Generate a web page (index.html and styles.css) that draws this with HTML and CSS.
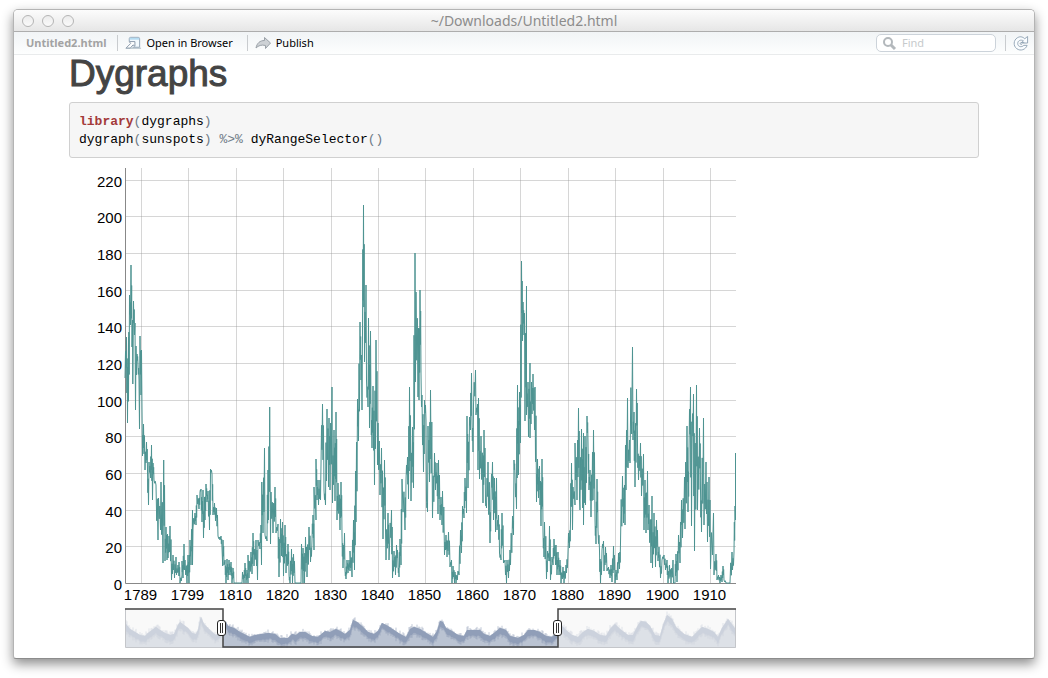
FILE: index.html
```html
<!DOCTYPE html>
<html lang="en">
<head>
<meta charset="utf-8">
<title>~/Downloads/Untitled2.html</title>
<link rel="stylesheet" href="styles.css">
</head>
<body>
<div class="window">
  <header class="titlebar">
    <div class="lights">
      <button class="light" aria-label="Close"></button>
      <button class="light" aria-label="Minimize"></button>
      <button class="light" aria-label="Zoom"></button>
    </div>
    <div class="title">~/Downloads/Untitled2.html</div>
  </header>
  <nav class="toolbar">
    <span class="filename">Untitled2.html</span>
    <span class="separator"></span>
    <button class="tool">
      <svg class="tool-icon" width="17" height="14" viewBox="0 0 18 14" fill="none">
        <path d="M4.500 5V2.500Q4.500 1 6 1H14Q15.500 1 15.500 2.500V11.500H8" fill="#f3f9fd" stroke="#8fa3b5"/>
        <path d="M5 2.500H15" stroke="#b4dcf2" stroke-width="2"/>
        <path d="M1 12.500L6 7.500L4.500 5.500H10.500V10.500L8.500 9L5.500 12.500Z" fill="#fff" stroke="#8796a8"/>
        <path d="M1 12.500H17" stroke="#a5b2be"/>
      </svg>
      Open in Browser
    </button>
    <span class="separator"></span>
    <button class="tool">
      <svg class="tool-icon" width="17" height="14" viewBox="0 0 17 14">
        <path d="M1 12C2 7 5 4.500 9.500 4.500V1.500L15.500 7L10.500 12.500V9.500C6.500 8.500 3.500 9.500 1 12Z" fill="#cdd1d5" stroke="#9aa1a8"/>
      </svg>
      Publish
    </button>
    <label class="search">
      <svg width="15" height="15" viewBox="0 0 15 15" fill="none" stroke="#b3b8bc">
        <circle cx="6" cy="6" r="4" stroke-width="2"/>
        <path d="M9 9L13 13" stroke-width="3"/>
      </svg>
      <input class="search-input" type="text" placeholder="Find" aria-label="Find">
    </label>
    <span class="separator"></span>
    <button class="refresh" aria-label="Refresh">
      <svg width="16" height="17" viewBox="0 0 17 17" fill="none" stroke="#92a4b5">
        <path d="M12.500 3.500L15.500 1V8H9L11 5.500C8 4 5 5.500 5 8.500C5 12 9 13 11.500 10.500H15C13.500 15 8 17 4 14C0 11 .500 5 4.500 2.500C7 .800 10 1 12.500 3.500Z" fill="#fafdff"/>
        <path d="M12 7.500H8.500C7 8 7.500 10 9.500 9.500" />
      </svg>
    </button>
  </nav>
  <main class="content">
    <h1 class="heading">Dygraphs</h1>
<pre class="code"><code><span class="keyword">library</span><span class="op">(</span>dygraphs<span class="op">)</span>
dygraph<span class="op">(</span>sunspots<span class="op">)</span> <span class="op">%&gt;%</span> dyRangeSelector<span class="op">()</span></code></pre>
    <div class="chart">
      <svg class="plot" id="plot" viewBox="69 168 667 434" role="img" aria-label="Sunspots by year"></svg>
      <div class="selector">
        <svg class="overview" id="overview" viewBox="125 608 611 40" aria-hidden="true"></svg>
        <input class="handle" type="range" min="0" max="611" value="97" aria-label="Range start">
        <input class="handle" type="range" min="0" max="611" value="432" aria-label="Range end">
      </div>
    </div>
  </main>
</div>
<script src="chart.js"></script>
</body>
</html>
```
FILE: styles.css
```css
* {
  box-sizing: border-box;
}

body {
  margin: 0;
  padding: 9px 13px 19px;
  background: #fff;
  font-family: "Noto Sans", "Open Sans", sans-serif;
}

button {
  padding: 0;
  border: 0;
  background: none;
  font: inherit;
  color: inherit;
}

svg {
  display: block;
}

.window {
  min-height: calc(100vh - 28px);
  border: 1px solid #b4b4b4;
  border-bottom-color: #8c8c8c;
  border-radius: 5px 5px 3px 3px;
  background: #fff;
  box-shadow: 0 5px 12px rgba(0, 0, 0, 0.45);
}

.titlebar {
  display: grid;
  grid-template-columns: 1fr auto 1fr;
  align-items: center;
  height: 22px;
  padding: 0 8px;
  border-bottom: 1px solid #adadad;
  border-radius: 4px 4px 0 0;
  background: linear-gradient(#fcfcfc, #e6e6e6);
}

.lights {
  display: flex;
  gap: 8px;
}

.light {
  width: 12px;
  height: 12px;
  border: 1px solid #b5b5b5;
  border-radius: 50%;
  background: linear-gradient(#ececec, #fafafa);
}

.title {
  font-size: 14px;
  line-height: 20px;
  color: #8c8c8c;
}

.toolbar {
  display: flex;
  align-items: center;
  height: 23px;
  padding: 0 5px 0 12px;
  border-bottom: 1px solid #e9ebec;
  background: linear-gradient(#f1f4f6, #fdfefe);
  font-size: 11px;
  line-height: 16px;
  color: #000;
}

.filename {
  margin-right: 2px;
  font-weight: bold;
  color: #a3a3a3;
}

.separator {
  width: 1px;
  height: 16px;
  margin: 0 7px 0 9px;
  background: #c9cccf;
}

.tool {
  display: flex;
  align-items: center;
  gap: 4px;
  margin-right: 5px;
}

.search {
  display: flex;
  align-items: center;
  gap: 5px;
  width: 120px;
  height: 18px;
  margin-left: auto;
  padding: 0 5px;
  border: 1px solid #ccd3da;
  border-radius: 5px;
  background: #fff;
}

.search-input {
  width: 80px;
  padding: 0;
  border: 0;
  outline: 0;
  background: none;
  font: inherit;
}

.search-input::placeholder {
  color: #c6cacc;
}

.content {
  padding: 0 55px 10px;
}

.heading {
  margin: 0 0 9px;
  font-family: "Liberation Sans", Arial, sans-serif;
  font-size: 37px;
  font-weight: normal;
  line-height: 38px;
  color: #444;
  -webkit-text-stroke: 1px #444;
}

.code {
  margin: 0 0 10px;
  padding: 10px 9px 8px;
  border: 1px solid #d0d0d0;
  border-radius: 3px;
  background: #f6f6f6;
  font-family: "Liberation Mono", "Courier New", monospace;
  font-size: 13px;
  line-height: 18px;
  color: #000;
}

.code code {
  font: inherit;
}

.keyword {
  font-weight: bold;
  color: #a33a3a;
}

.op {
  color: #6f7b87;
}

.chart {
  width: 667px;
  max-width: 100%;
}

.plot {
  width: 100%;
}

.grid {
  stroke: #999;
  stroke-opacity: 0.4;
}

.axis {
  stroke: #888;
}

.series {
  fill: none;
  stroke: #4d9391;
}

.label {
  font-family: "Liberation Sans", Arial, sans-serif;
  font-size: 15px;
  fill: #000;
}

.label-y {
  text-anchor: end;
}

.label-x {
  text-anchor: middle;
}

.selector {
  position: relative;
  margin: 6px 0 0 56px;
}

.overview {
  width: 100%;
}

.handle {
  position: absolute;
  top: 12px;
  left: -5px;
  width: calc(100% + 10px);
  height: 16px;
  margin: 0;
  appearance: none;
  background: none;
  pointer-events: none;
}

.handle::-webkit-slider-thumb {
  appearance: none;
  width: 9px;
  height: 16px;
  border: 1px solid #222;
  border-radius: 3px;
  background: linear-gradient(90deg, #fff 2px, #333 2px, #333 3px, #fff 3px, #fff 4px, #333 4px, #333 5px, #fff 5px) center / 7px 10px no-repeat #fff;
  pointer-events: auto;
}
```
FILE: chart.js
```js
(function () {
const plot = document.getElementById("plot");
const overview = document.getElementById("overview");

function add(parent, name, attrs, text) {
  const node = document.createElementNS("http://www.w3.org/2000/svg", name);
  for (const key in attrs) node.setAttribute(key, attrs[key]);
  if (text !== undefined) node.textContent = text;
  parent.appendChild(node);
}

// Grid and axis labels
const rows = [583.5, 546.5, 510.5, 473.5, 436.5, 400.5, 363.5, 326.5, 290.5, 253.5, 216.5, 180.5];
rows.forEach((y, i) => {
  if (i) add(plot, "path", { class: "grid", d: `M125 ${y}H736` });
  add(plot, "text", { class: "label label-y", x: 122, y: y + 6 }, i * 20);
});
const years = [1789, 1799, 1810, 1820, 1830, 1840, 1850, 1860, 1870, 1880, 1890, 1900, 1910];
const columns = [141.5, 188.5, 236.5, 283.5, 331.5, 378.5, 425.5, 473.5, 520.5, 568.5, 615.5, 663.5, 710.5];
columns.forEach((x, i) => {
  add(plot, "path", { class: "grid", d: `M${x} 168V583` });
  add(plot, "text", { class: "label label-x", x: x - 1, y: 600 }, years[i]);
});
add(plot, "path", { class: "axis", d: "M125.5 168V583.5H736", fill: "none" });

// Monthly sunspot counts
const series = `125,378 126.5,337 127.5,423 128.5,337 128.5,401 129.5,295 130.5,325 131,265 132,347 132.5,320 132.8,384 133.5,301 134.5,335 135,323 135.5,410 136,346 136.5,375 137,354 138,364 139,380 139.5,429 140,336 141,395 141.5,350 142,409
142.5,456 143.5,424 145,470 146.5,442 147.5,470 148.5,505 149,462 150.5,478 151.5,445 152.5,500 153,463 154,480 156,485 158,540 158.5,498 160.5,530 161,482 163,563 163.7,460 165,561 166,527 167,560 167.5,534 168,558 169,536 169.5,552 170,526 171.5,580 173,555 174.5,578 176,557 176.5,575 178,565 179,576 179,562 180,583 182,575 182,561 183,578 184,544 184.5,570 185,560 187,583 188,555 189,583 190,540 191,565 192.5,510 192.5,565 193,528 195,513 196,525 197,495 199,509 200,492 201,489 202,522 203,490 203.5,538 204.5,497 205,520 206,484 207,502 208,491 209.5,530 210.5,469 212,474 213,515 214.5,503 215.5,521 216.5,508 218,536 220,540 221,536 222,548 222.7,566 223,540 224,565 225,560 226,583 227,559 228,580 229,560 230,575 231,562 232,583 233,568 234,583 242,583 242.5,572 244,583 245,563 246,583 247,570 248,583 248,555 249,578 251,552 252,574 253,533 254,566 256,540 257.5,580 258,540 260,549 261,525 261.5,565 261.8,482 263,533 264.5,448 265,535 267,541 268,470 268.5,520 269.7,407
270.5,544 271,492 273,533 275,487 276,533 278,524 279,577 280.5,519 281.5,556 282.5,522 283.5,576 285,525 286,573 288,544 289,575 290,583 291.5,549 292.5,583 293.5,554 295,583 301,583 301.5,544 303,583 303,548 304.5,583 305.5,537 307,577 309,527 310.5,562 312,540 313,515 314,550 314,487 316,520 316,459 317,500 318,480 318.5,505 320,480 320.5,500 321,465 322.5,404 324,490 325.5,505 327,409 328.5,487 329,418 330,490 332,387 332.5,503 334,430 335,501 336,412 337,520 338,483 340,530 341,482 342,535 343,568 344.5,533 345,570 346,579 347,560 348,573 349,560 350,571 350,551 352,577 353.5,520 354.5,570 355.5,471 356,522 357.5,399 358.5,441
360,322 361,380 361.5,355 362,410 362.5,332 363.5,205 364.5,362 366,285 366.5,380 368,407 368.5,318 369.5,428 370.5,331 371,411 372,448 373,386 374.5,485 376,340 377.5,465 378,423 380,495 381.5,448 383,539 384.5,460 385.5,530 386,560 388,513 389,560 389.5,547 391.5,510 392.5,578 394,551 395.5,575 396.5,545 398,565 399,577 400,539 401,565 402,479 405,530 406,480 407.5,457 408.5,499 409.5,387 411,501 412.5,427 413.5,488 415,253 415.5,382 416,292 418,397 418.5,328 419,400 420,290 421,374 421.5,407 422,395 423.5,472 424.5,400 426,420 426.5,500 427.5,512 428,426 429.5,482 430.5,390 432.5,518 434.5,453 435.5,490 437,463 438,514 438.5,460 440,520 441,497 442,525 442.5,491 444.5,555 446,535 447,557 448.5,532 450,567 451.5,560 452,583 453,566 454.5,583 455,572 456,583 458,571 459,575 460.5,530 461.5,553 462.5,506 464,518 465,478 466.5,513 467,416 468,488 469.5,417
470.5,430 471.5,373 472,420 473,452 473.5,405 475.5,370 476,415 477.5,404 478,470 478.5,398 479.5,479 481,436 483,503 484,430 485.5,502 486.5,508 488,462 490,543 491,496 492.5,462 493.5,520 494.5,478 495.5,532 496.5,478 497,530 498.5,515 499.5,553 501,560 502,513 503.5,563 505,560 506.5,583 507,560 508.5,578 510,550 510.5,565 512.5,516 513.5,535 514,460 515,475 516.5,509 517.5,385 518.5,475 519.5,392 520.5,443 521.5,261 522.5,341 523,302 524,335 524.5,313 525,421 526.5,286 526.5,415 528,382 528.5,437 530,363 530,438 531.5,382 532,414 533,374 534.5,430 535,387 536.5,502 537.5,459 538.5,498 539.5,466 541,526 542,459 543,532 544,557 544.5,522 546.5,579 547.5,551 549,561 549.5,526 550.5,580 552,557 553,565 554,539 555.5,565 556,545 557,575 558,552 559,575 560,560 561,583 563,567 564,583 566,565 566.5,573 568,552 568.5,533 569.5,548 570.5,521 571.5,463 572.5,530 573,487 575,505 575,443 577,500 578.5,408 579.5,500 580,510 581.5,429 582.5,508 583.5,433 583.5,525 585,436 585.5,505 587,416 588,442 589,490 590,470 591,517 592.5,452 593,500 593.5,430 595,520 596,544 597,479 598,530 599.5,551 600.5,583 602,550 603.5,541 604,571 605.5,547 607,571 608.5,567 610,578 611,565 612,582 613.5,546 615,583 616,570 617,580
618.5,553 619.5,569 620.5,543 622.5,476 623.5,523 624.5,485 625,525 625.5,445 626,490 627.5,398 628,468 629.5,440 630,463 632.5,347 633,440 634,412 635,487 636.5,389 637.5,445 638.5,480 640.5,443 641.5,496 643.5,454 644,530 645,480 646,533 647.5,471 648,530 649,505 651,563 652,496 652.5,568 654,513 655.5,567 656.5,520 658,561 659,547 660.5,578 662,560 664,555 665.5,570 667,560 668,583 669.5,565 671,583 673,560 673.5,583 675,583 676,554 677,582 678.5,535 680,563 681.5,500 682.5,538 684.5,477 685,529 687,426 688,512 689,450 690.5,387 691.5,526 692,450 693.5,394 694.5,551 696.5,385 697.5,510 699.5,428 700.5,490 701.5,532 703.5,418 704,525 706,462 707.5,542 709,477 710.5,569 713.5,513 714,575 716,554 717,580 718.5,575 720,583 721,575 722,582 723,566 724,580 726,583 730,583 732,552 732.5,570 734,552 735,506 735.5,520 735.5,453`;
const turns = series.split(/\s+/).map((pair) => pair.split(",").map(Number));
const months = turns.flatMap(([x, y], i) => {
  const next = turns[i + 1];
  if (!next || next[0] - x < 1) return [[x, y]];
  const dx = next[0] - x;
  const dy = next[1] - y;
  return [[x, y], [x + dx * 0.35, y + dy * 0.65], [x + dx * 0.65, y + dy * 0.25]];
});
add(plot, "polyline", { class: "series", points: months.join(" ") });

// Range selector: upper edge of the smoothed overview
const edge = [126,624,130,629,135,632,140,635,145,636,148,633,152,630,156,627,160,630,165,633,170,635,174,634,178,625,180,622,184,625,188,628,192,633,196,634,198,630,200,620,201,617,204,624,208,628,212,632,216,635,220,632,226,622,228,626,234,628,240,632,250,637,255,635,262,634,268,633,275,634,280,638,288,638,292,634,296,635,300,632,305,632,312,636,318,637,325,631,330,632,336,629,342,632,345,634,350,630,353,620,357,622,362,626,368,632,374,634,378,631,382,623,388,626,394,630,400,634,406,637,410,629,414,627,420,629,428,634,433,637,437,631,440,621,443,622,446,628,452,631,458,635,464,636,467,630,472,630,480,630,484,634,490,636,494,633,500,628,506,630,510,636,518,638,524,635,528,630,534,630,540,632,546,636,552,637,556,633,562,626,566,630,572,635,578,637,583,632,588,629,594,631,600,635,606,636,610,629,615,624,620,629,628,635,633,635,638,625,641,621,646,622,650,626,655,635,660,636,663,625,667,615,672,619,676,627,684,634,692,637,696,633,702,627,708,629,714,632,718,637,722,628,728,619,734,627,736,630];
let outline = "";
let band = "";
let spikes = "";
let k = 0;
for (let x = 126; x < 736; x++) {
  while (edge[k + 2] < x) k += 2;
  const t = (x - edge[k]) / (edge[k + 2] - edge[k]);
  const y = edge[k + 1] + t * (edge[k + 3] - edge[k + 1]);
  const noise = Math.abs(Math.sin(x * 12.9) * 43758) % 1;
  outline += `L${x} ${y.toFixed(1)}`;
  band = `L${x} ${(y + 5 + noise * 2).toFixed(1)}` + band;
  spikes += `M${x} ${(y - noise * noise * 4).toFixed(1)}V${(y + 6 + noise * 4).toFixed(1)}`;
}
add(overview, "path", { d: `M126 648${outline}L736 648Z`, fill: "#bac3d2" });
add(overview, "path", { d: spikes, stroke: "#8c9ab5", "stroke-opacity": 0.55, fill: "none" });
add(overview, "path", { d: `M${outline.slice(1)}${band}Z`, fill: "#909eb8" });
add(overview, "path", { d: "M125 608H223V648H125ZM558 608H736V648H558Z", fill: "#f5f5f5", "fill-opacity": 0.6 });
add(overview, "path", { d: "M125.5 609V647.5H223M558 647.5H735.5V609", stroke: "#c4c6ca", fill: "none" });
add(overview, "path", { d: "M125 609H223V647H558V609H736", stroke: "#444", "stroke-width": 1.5, fill: "none" });
})();
```
